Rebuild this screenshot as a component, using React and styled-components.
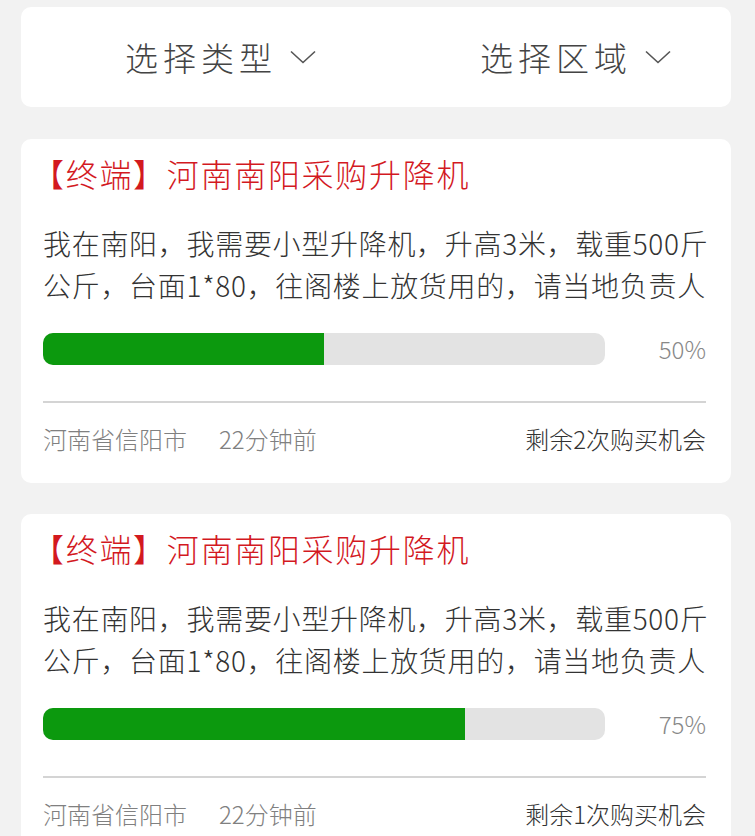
import React from "react";
import styled, { createGlobalStyle } from "styled-components";

const GlobalStyle = createGlobalStyle`
  html, body {
    margin: 0;
    padding: 0;
    background: #f2f2f2;
  }
  body {
    font-family: "Noto Sans CJK SC", "Noto Sans", sans-serif;
    font-weight: 300;
  }
`;

const Page = styled.div`
  padding: 7px 24px 0 21px;
  display: flex;
  flex-direction: column;
  gap: 32px;
`;

const FilterBar = styled.div`
  height: 100px;
  background: #fff;
  border-radius: 10px;
  display: grid;
  grid-template-columns: 1fr 1fr;
`;

const FilterItem = styled.div`
  display: flex;
  align-items: center;
  justify-content: center;
  padding-left: 44px;
  color: #444;
  font-size: 33px;
  letter-spacing: 5px;
  gap: 13px;
`;

const Chevron = () => (
  <svg width="26" height="14" viewBox="0 0 26 14" fill="none">
    <path d="M1 1.5 L13 12.5 L25 1.5" stroke="#555" strokeWidth="1.6" />
  </svg>
);

const List = styled.div`
  display: flex;
  flex-direction: column;
  gap: 31px;
`;

const Card = styled.div`
  background: #fff;
  border-radius: 10px;
  padding: 9px 25px 24px 22px;
`;

const Title = styled.div`
  color: #d3191f;
  font-size: 32px;
  line-height: 50px;
  letter-spacing: 1.7px;
  margin-left: -11px;
`;

const Body = styled.div`
  margin-top: 24px;
  color: #333;
  font-size: 28px;
  line-height: 42px;
  letter-spacing: 0.7px;
  white-space: nowrap;
`;

const ProgressRow = styled.div`
  margin-top: 25px;
  display: grid;
  grid-template-columns: 1fr 101px;
  align-items: center;
`;

const Track = styled.div`
  height: 32px;
  border-radius: 10px;
  background: #e3e3e3;
  overflow: hidden;
`;

const Fill = styled.div`
  height: 100%;
  background: #0c990e;
`;

const Percent = styled.div`
  text-align: right;
  color: #888;
  font-size: 24px;
`;

const Divider = styled.div`
  margin-top: 35px;
  height: 2px;
  background: #d4d4d4;
`;

const Footer = styled.div`
  margin-top: 16px;
  display: flex;
  align-items: center;
  justify-content: space-between;
  font-size: 24px;
  line-height: 40px;
  white-space: nowrap;
`;

const Meta = styled.div`
  display: flex;
  gap: 32px;
  color: #808080;
`;

const Remain = styled.div`
  color: #333;
`;

const items = [
  { progress: 50, remain: 2 },
  { progress: 75, remain: 1 },
];

function App() {
  return (
    <>
      <GlobalStyle />
      <Page>
        <FilterBar>
          <FilterItem>
            选择类型
            <Chevron />
          </FilterItem>
          <FilterItem>
            选择区域
            <Chevron />
          </FilterItem>
        </FilterBar>
        <List>
          {items.map((item, i) => (
            <Card key={i}>
              <Title>【终端】河南南阳采购升降机</Title>
              <Body>
                我在南阳，我需要小型升降机，升高3米，载重500斤
                <br />
                公斤，台面1*80，往阁楼上放货用的，请当地负责人
              </Body>
              <ProgressRow>
                <Track>
                  <Fill style={{ width: `${item.progress}%` }} />
                </Track>
                <Percent>{item.progress}%</Percent>
              </ProgressRow>
              <Divider />
              <Footer>
                <Meta>
                  <span>河南省信阳市</span>
                  <span>22分钟前</span>
                </Meta>
                <Remain>剩余{item.remain}次购买机会</Remain>
              </Footer>
            </Card>
          ))}
        </List>
      </Page>
    </>
  );
}

export default App;
